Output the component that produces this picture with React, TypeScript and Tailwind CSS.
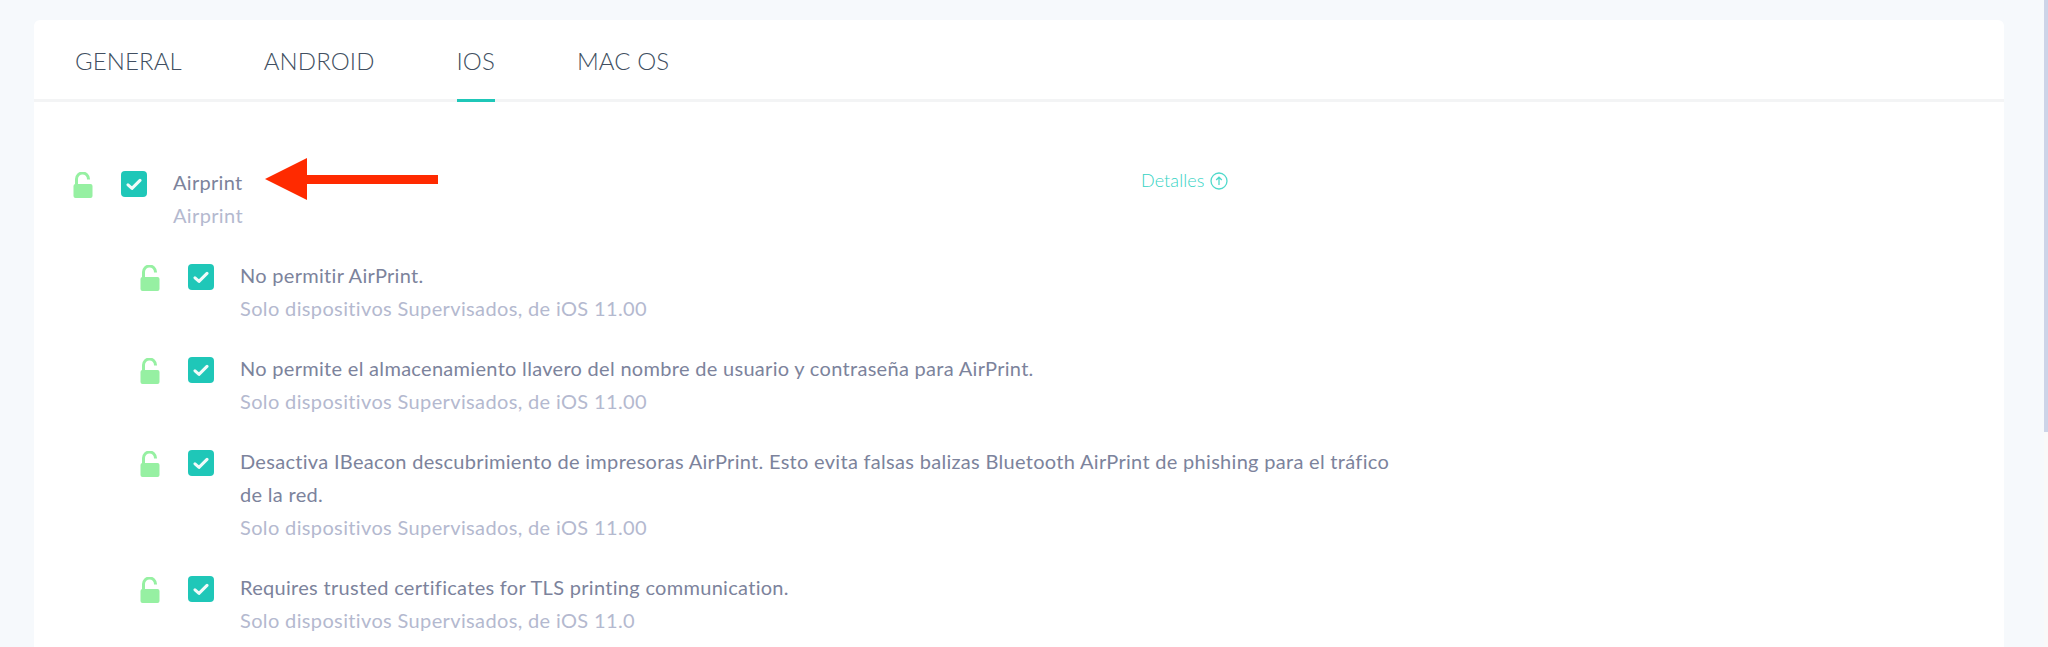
const font = { fontFamily: '"Lato", "Noto Sans", sans-serif' };

function Lock() {
  return (
    <svg width="20" height="26" viewBox="0 0 20 26" className="shrink-0">
      <rect x="0.5" y="12" width="19" height="14" rx="2" fill="#96f0a2" />
      <path d="M3.5 13V7a6 6 0 0 1 12 0v0.5" fill="none" stroke="#96f0a2" strokeWidth="3" />
    </svg>
  );
}

function Check() {
  return (
    <div className="w-[26px] h-[26px] rounded-[4px] bg-[#1fc7b8] flex items-center justify-center shrink-0">
      <svg width="16" height="13" viewBox="0 0 16 13">
        <path d="M2 6.8 L6 10.4 L14 2.4" fill="none" stroke="#f2fbfa" strokeWidth="3" strokeLinecap="round" strokeLinejoin="round" />
      </svg>
    </div>
  );
}

function Row({ title, sub, className }: { title: React.ReactNode; sub: string; className?: string }) {
  return (
    <div className={"flex items-start " + (className ?? "")}>
      <div className="mt-[1px]"><Lock /></div>
      <div className="ml-[28px]"><Check /></div>
      <div className="ml-[26px] w-[1150px] -mt-[5px]">
        <div className="text-[20px] leading-[33px] text-[#7c839c] tracking-[0.3px]">{title}</div>
        <div className="text-[20px] leading-[33px] text-[#b4b9cf] tracking-[0.36px]">{sub}</div>
      </div>
    </div>
  );
}

export default function App() {
  return (
    <div style={font} className="relative h-[647px] overflow-hidden bg-[#f6f9fc] flex">
      <div className="flex-1 pl-[34px] pr-[40px] pt-[20px]">
        <div className="bg-white rounded-t-[6px] h-[700px]">
          <div className="h-[82px] border-b-[3px] border-[#f3f4f5] flex pl-[41px] gap-[82px] text-[24px] text-[#414f61] font-light tracking-[0.1px]">
            <div className="h-[82px] pt-[22px] leading-[38px]">GENERAL</div>
            <div className="h-[82px] pt-[22px] leading-[38px]">ANDROID</div>
            <div className="h-[82px] pt-[22px] leading-[38px] border-b-[3px] border-[#1fc7b8]">IOS</div>
            <div className="h-[82px] pt-[22px] leading-[38px]">MAC OS</div>
          </div>
          <div className="pl-[39px] pt-[69px] relative">
            <div className="flex items-start">
              <Row title="Airprint" sub="Airprint" />
            </div>
            <div className="absolute left-[1107px] top-[65px] flex items-center gap-[5px] text-[18px] font-light text-[#36d3c4] tracking-[0.1px]">
              <span>Detalles</span>
              <svg width="18" height="18" viewBox="0 0 18 18" fill="none" stroke="#4fd9cb" strokeWidth="1.3">
                <circle cx="9" cy="9" r="8" />
                <path d="M9 13V5.5M6.2 8 9 5.2 11.8 8" />
              </svg>
            </div>
            <div className="pl-[67px] pt-[32px] flex flex-col gap-[32px]">
              <Row title="No permitir AirPrint." sub="Solo dispositivos Supervisados, de iOS 11.00" />
              <Row title="No permite el almacenamiento llavero del nombre de usuario y contraseña para AirPrint." sub="Solo dispositivos Supervisados, de iOS 11.00" />
              <Row title="Desactiva IBeacon descubrimiento de impresoras AirPrint. Esto evita falsas balizas Bluetooth AirPrint de phishing para el tráfico de la red." sub="Solo dispositivos Supervisados, de iOS 11.00" />
              <Row title="Requires trusted certificates for TLS printing communication." sub="Solo dispositivos Supervisados, de iOS 11.0" />
            </div>
            <svg width="174" height="42" viewBox="0 0 174 42" className="absolute left-[231px] top-[56px]">
              <path d="M0 21 L42 0 V17 H173 V26 H42 V42 Z" fill="#ff2a00" />
            </svg>
          </div>
        </div>
      </div>
      <div className="w-[4px] h-full bg-[#f9f9f9]">
        <div className="h-[432px] bg-[#cdd4e8]" />
      </div>
    </div>
  );
}
